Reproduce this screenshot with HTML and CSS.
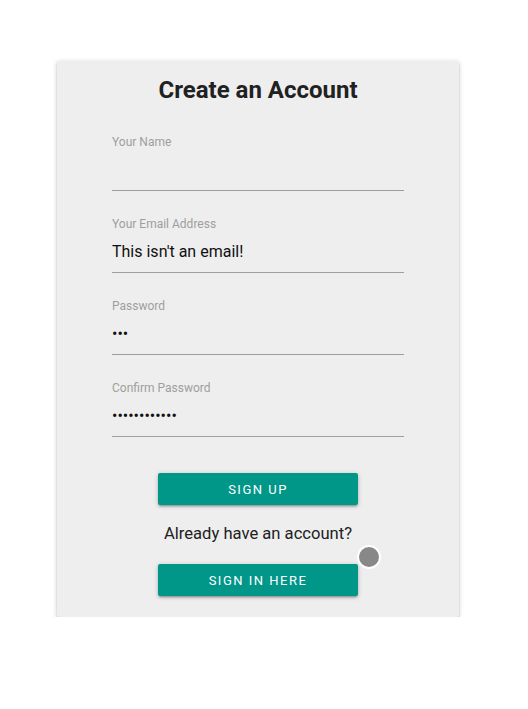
FILE: index.html
```html
<!DOCTYPE html>
<html lang="en">
<head>
<meta charset="utf-8">
<title>Create an Account</title>
<link rel="stylesheet" href="styles.css">
</head>
<body>
<div class="card">
  <h1 class="title">Create an Account</h1>
  <form class="form">
    <label class="field">
      <span class="label">Your Name</span>
      <input class="input" type="text" value="">
    </label>
    <label class="field">
      <span class="label">Your Email Address</span>
      <input class="input" type="text" value="This isn't an email!">
    </label>
    <label class="field">
      <span class="label">Password</span>
      <input class="input" type="password" value="abc">
    </label>
    <label class="field">
      <span class="label">Confirm Password</span>
      <input class="input" type="password" value="abcdefghijkl">
    </label>
    <div class="actions">
      <button class="btn" type="button">Sign Up</button>
      <p class="prompt">Already have an account?</p>
      <button class="btn" type="button">Sign In Here</button>
    </div>
  </form>
  <span class="dot"></span>
</div>
</body>
</html>
```
FILE: styles.css
```css
* { box-sizing: border-box; }
html, body { margin: 0; padding: 0; background: #fff; }
body {
  font-family: Roboto, "Liberation Sans", sans-serif;
  padding-top: 61px;
}
.card {
  position: relative;
  margin-left: 57px;
  width: 402px;
  height: 556px;
  background: #eeeeee;
  border-radius: 2px;
  box-shadow: 0 2px 2px 0 rgba(0,0,0,0.14), 0 3px 1px -2px rgba(0,0,0,0.12), 0 1px 5px 0 rgba(0,0,0,0.2);
  padding: 13px 55px 21px;
}
.title {
  margin: 0;
  font-size: 24px;
  line-height: 32px;
  font-weight: 700;
  color: #212121;
  text-align: center;
}
.form {
  display: flex;
  flex-direction: column;
  margin-top: 29px;
}
.field {
  display: flex;
  flex-direction: column;
  margin-bottom: 26px;
}
.label {
  font-size: 12px;
  line-height: 14px;
  color: #9e9e9e;
}
.input {
  height: 42px;
  border: 0;
  border-bottom: 1px solid #9e9e9e;
  background: transparent;
  padding: 0;
  font-family: Roboto, "Liberation Sans", sans-serif;
  font-size: 16px;
  color: #111;
  outline: none;
}
.actions {
  display: flex;
  flex-direction: column;
  align-items: center;
  margin-top: 10px;
}
.btn {
  width: 200px;
  height: 32px;
  border: 0;
  border-radius: 2px;
  background: #009688;
  color: #fff;
  font-family: Roboto, "Liberation Sans", sans-serif;
  font-size: 13px;
  font-weight: 400;
  letter-spacing: 1.5px;
  text-transform: uppercase;
  box-shadow: 0 2px 2px 0 rgba(0,0,0,0.14), 0 3px 1px -2px rgba(0,0,0,0.12), 0 1px 5px 0 rgba(0,0,0,0.2);
}
.prompt {
  margin: 19px 0 20px;
  font-size: 16.6px;
  line-height: 20px;
  color: #212121;
}
.dot {
  position: absolute;
  left: 300px;
  top: 484px;
  width: 24px;
  height: 24px;
  border-radius: 50%;
  background: #888;
  border: 2px solid #fff;
}
```
